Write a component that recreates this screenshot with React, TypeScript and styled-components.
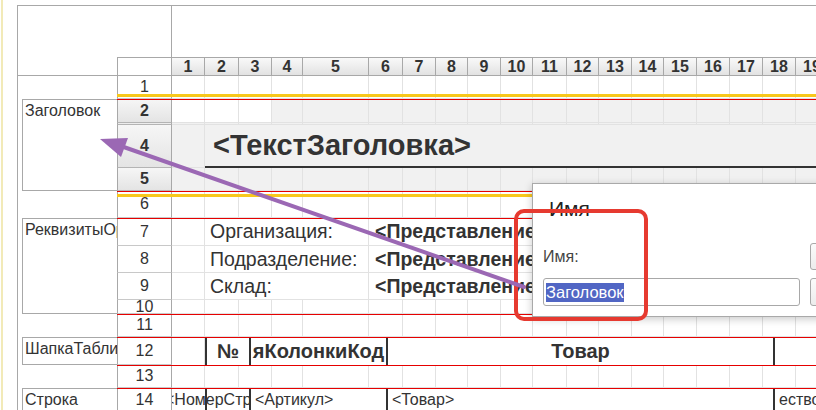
import React from "react";
import styled, { createGlobalStyle } from "styled-components";

const GlobalStyle = createGlobalStyle`
  * { box-sizing: border-box; }
  html, body {
    margin: 0;
    padding: 0;
    background: #fff;
  }
  body {
    font-family: "Liberation Sans", Arial, sans-serif;
    color: #333;
    overflow: hidden;
  }
`;

// widths of the sheet columns 1..19
const COLS = [33, 34, 33, 31, 66, 34, 33, 32, 33, 32, 34, 32, 33, 32, 33, 33, 33, 33, 33];
// heights of the sheet rows 1..14
const ROWS = [23, 24, 2, 43, 23, 27, 28, 27, 27, 14, 23, 28, 23, 24];

const gr = (n: number) => n + 2; // sheet row -> grid row
const gc = (c: number) => c + 2; // sheet column -> grid column

const Page = styled.div`
  position: relative;
  width: 816px;
  height: 410px;
  overflow: hidden;
  display: flex;
  align-items: flex-start;
`;

const Margin = styled.div`
  flex: none;
  width: 17px;
  align-self: stretch;
  background: linear-gradient(
    to right,
    #fff 0,
    #fff 1px,
    #f2eab8 1px,
    #f2eab8 3px,
    #fff 3px
  );
`;

const Sheet = styled.div`
  flex: none;
  margin-top: 5px;
  display: grid;
  grid-template-columns: 99px 55px ${COLS.map((w) => `${w}px`).join(" ")};
  grid-template-rows: 51px 19px ${ROWS.map((h) => `${h}px`).join(" ")};
  border-top: 1px solid #a8a8a8;
  border-left: 1px solid #a8a8a8;
`;

const TopLeft = styled.div`
  grid-row: 1;
  grid-column: 1 / span 2;
  border-right: 1px solid #a8a8a8;
`;

const LabelHead = styled.div`
  grid-row: 2;
  grid-column: 1;
  border-bottom: 1px solid #a8a8a8;
`;

const Corner = styled.div`
  grid-row: 2;
  grid-column: 2;
  border: 1px solid #a8a8a8;
  background: #fff;
`;

const ColHead = styled.div<{ $c: number }>`
  grid-row: 2;
  grid-column: ${(p) => p.$c};
  display: flex;
  align-items: center;
  justify-content: center;
  border-top: 1px solid #a8a8a8;
  border-bottom: 1px solid #a8a8a8;
  border-right: 1px solid #a8a8a8;
  background: linear-gradient(#f9f9f9, #e2e2e2);
  font-size: 16px;
  font-weight: bold;
  color: #333;
  white-space: nowrap;
`;

const RowNum = styled.div<{ $r: number; $active?: boolean }>`
  grid-row: ${(p) => p.$r};
  grid-column: 2;
  display: flex;
  align-items: center;
  justify-content: center;
  overflow: hidden;
  border-left: 1px solid #a8a8a8;
  border-right: 1px solid #a8a8a8;
  border-bottom: 1px solid ${(p) => (p.$active ? "#b4b4b4" : "#c8c8c8")};
  background: ${(p) => (p.$active ? "linear-gradient(#f6f6f6, #e4e4e4)" : "#fff")};
  font-size: 16px;
  font-weight: ${(p) => (p.$active ? "bold" : "normal")};
  line-height: 14px;
  color: #333;
`;

const Cell = styled.div<{ $r: number; $c: number; $fill?: boolean }>`
  grid-row: ${(p) => p.$r};
  grid-column: ${(p) => p.$c};
  background: ${(p) => (p.$fill ? "#f1f1f1" : "#fff")};
  border-right: 1px solid #e2e2e2;
  border-bottom: 1px solid #e2e2e2;
`;

const GroupBox = styled.div<{ $r: number; $span: number }>`
  grid-row: ${(p) => p.$r} / span ${(p) => p.$span};
  grid-column: 1;
  margin-left: 4px;
  padding: 2px 2px;
  border: 1px solid #a8a8a8;
  border-right: none;
  font-size: 16px;
  line-height: 18px;
  white-space: nowrap;
  overflow: hidden;
  color: #333;
`;

const Rule = styled.div<{ $r: number; $end?: boolean; $gold?: boolean; $offset?: number }>`
  grid-row: ${(p) => p.$r};
  grid-column: 2 / -1;
  align-self: ${(p) => (p.$end ? "end" : "start")};
  height: ${(p) => (p.$gold ? 3 : 1)}px;
  margin: ${(p) => (p.$end ? `0 0 ${p.$offset ?? 0}px` : `${p.$offset ?? 0}px 0 0`)};
  background: ${(p) => (p.$gold ? "#f8c81c" : "#e60000")};
  z-index: 2;
`;

const TitleCell = styled.div`
  grid-row: ${gr(4)};
  grid-column: ${gc(2)} / -1;
  display: flex;
  align-items: center;
  padding-left: 8px;
  background: #f1f1f1;
  border-bottom: 2px solid #333;
  font-size: 29px;
  font-weight: bold;
  color: #333;
  white-space: nowrap;
`;

const FieldLabel = styled.div<{ $r: number }>`
  grid-row: ${(p) => p.$r};
  grid-column: ${gc(2)} / span 4;
  display: flex;
  align-items: center;
  padding-left: 5px;
  border-right: 1px solid #e2e2e2;
  border-bottom: 1px solid #e2e2e2;
  font-size: 19.5px;
  white-space: nowrap;
`;

const FieldValue = styled.div<{ $r: number }>`
  grid-row: ${(p) => p.$r};
  grid-column: ${gc(6)} / -1;
  display: flex;
  align-items: center;
  padding-left: 6px;
  border-bottom: 1px solid #e2e2e2;
  font-size: 19.5px;
  font-weight: bold;
  white-space: nowrap;
  overflow: hidden;
`;

const TableRow = styled.div<{ $r: number }>`
  grid-row: ${(p) => p.$r};
  grid-column: ${gc(1)} / -1;
  display: flex;
  overflow: hidden;
  background: #fff;
`;

const TCell = styled.div<{ $w: number; $dark?: boolean; $bold?: boolean; $center?: boolean }>`
  flex: none;
  width: ${(p) => p.$w}px;
  display: flex;
  align-items: center;
  justify-content: ${(p) => (p.$center ? "center" : "flex-start")};
  padding-left: ${(p) => (p.$center ? 0 : 4)}px;
  border-left: ${(p) => (p.$dark ? "2px solid #333" : "none")};
  border-right: ${(p) => (p.$dark ? "none" : "1px solid #e2e2e2")};
  font-size: ${(p) => (p.$bold ? 20 : 16)}px;
  font-weight: ${(p) => (p.$bold ? "bold" : "normal")};
  white-space: nowrap;
  overflow: hidden;
`;

const NumCell = styled.div`
  flex: none;
  position: relative;
  width: 77px;
  display: flex;
  align-items: center;
  font-size: 16px;
  white-space: nowrap;
  overflow: hidden;
  text-indent: -7px;

  &::after {
    content: "";
    position: absolute;
    left: 33px;
    top: 0;
    bottom: 0;
    width: 2px;
    background: #333;
  }
`;

const Dialog = styled.div`
  position: absolute;
  left: 532px;
  top: 183px;
  width: 300px;
  height: 134px;
  background: #fff;
  border: 1px solid #a9a9a9;
  box-shadow: 0 2px 8px rgba(0, 0, 0, 0.22);
  padding: 0 0 0 10px;
  z-index: 5;
`;

const DialogTitle = styled.div`
  margin: 13px 0 0 6px;
  height: 24px;
  font-size: 21px;
  line-height: 24px;
  color: #222;
`;

const DialogBody = styled.div`
  margin-top: 22px;
  display: grid;
  grid-template-columns: 257px 60px;
  grid-template-rows: 27px 28px;
  column-gap: 10px;
  row-gap: 8px;
`;

const FormLabel = styled.div`
  align-self: center;
  font-size: 16px;
  color: #444;
`;

const TextInput = styled.div`
  display: flex;
  align-items: center;
  padding-left: 2px;
  border: 1px solid #a8a8a8;
  border-radius: 3px;
  font-size: 16.5px;
`;

const Selected = styled.span`
  background: #5166c4;
  color: #fff;
  line-height: 19px;
`;

const SideButton = styled.div`
  border: 1px solid #a8a8a8;
  border-radius: 3px;
  background: linear-gradient(#fbfbfb, #ececec);
`;

const Overlay = styled.svg`
  position: absolute;
  left: 0;
  top: 0;
  z-index: 10;
  pointer-events: none;
`;

const Annotations = () => (
  <Overlay width={816} height={410} viewBox="0 0 816 410">
    <rect x={516} y={211} width={130} height={108} rx={8} fill="none" stroke="#e63a30" strokeWidth={4} />
    <line x1={118} y1={145} x2={524} y2={287} stroke="#9b68b4" strokeWidth={4} strokeLinecap="round" />
    <polygon points="100,139 128,138 121,157" fill="#9b68b4" />
  </Overlay>
);

const plainRows = [1, 2, 3, 5, 6, 10, 11, 13];
const fields = [
  { n: 7, label: "Организация:", value: "<ПредставлениеОрганизации>" },
  { n: 8, label: "Подразделение:", value: "<ПредставлениеПодразделения>" },
  { n: 9, label: "Склад:", value: "<ПредставлениеСклада>" },
];

export default function App() {
  return (
    <>
      <GlobalStyle />
      <Page>
        <Margin />
        <Sheet>
          <TopLeft />
          <LabelHead />
          <Corner />
          {COLS.map((_, i) => (
            <ColHead key={i} $c={gc(i + 1)}>
              {i + 1}
            </ColHead>
          ))}

          {ROWS.map((_, i) => {
            const n = i + 1;
            return (
              <RowNum key={n} $r={gr(n)} $active={n >= 2 && n <= 5}>
                {n === 3 ? "" : n}
              </RowNum>
            );
          })}

          {plainRows.map((n) =>
            COLS.map((_, i) => (
              <Cell
                key={`${n}-${i}`}
                $r={gr(n)}
                $c={gc(i + 1)}
                $fill={n === 3 || n === 5 || (n === 2 && i >= 3)}
              />
            ))
          )}

          <Cell $r={gr(4)} $c={gc(1)} $fill />
          <TitleCell>&lt;ТекстЗаголовка&gt;</TitleCell>

          {fields.map((f) => (
            <React.Fragment key={f.n}>
              <Cell $r={gr(f.n)} $c={gc(1)} />
              <FieldLabel $r={gr(f.n)}>{f.label}</FieldLabel>
              <FieldValue $r={gr(f.n)}>{f.value}</FieldValue>
            </React.Fragment>
          ))}

          <TableRow $r={gr(12)}>
            <TCell $w={33} />
            <TCell $w={44} $dark $bold $center>
              №
            </TCell>
            <TCell $w={137} $dark $bold $center>
              яКолонкиКод
            </TCell>
            <TCell $w={387} $dark $bold $center>
              Товар
            </TCell>
            <TCell $w={200} $dark />
          </TableRow>

          <TableRow $r={gr(14)}>
            <NumCell>&lt;НомерСтроки&gt;</NumCell>
            <TCell $w={137} $dark>
              &lt;Артикул&gt;
            </TCell>
            <TCell $w={387} $dark>
              &lt;Товар&gt;
            </TCell>
            <TCell $w={200} $dark>
              ество
            </TCell>
          </TableRow>

          <GroupBox $r={gr(2)} $span={4}>
            Заголовок
          </GroupBox>
          <GroupBox $r={gr(7)} $span={4}>
            РеквизитыОрганизации
          </GroupBox>
          <GroupBox $r={gr(12)} $span={1}>
            ШапкаТаблицы
          </GroupBox>
          <GroupBox $r={gr(14)} $span={1}>
            Строка
          </GroupBox>

          <Rule $r={gr(1)} $end $gold $offset={2} />
          <Rule $r={gr(2)} />
          <Rule $r={gr(6)} />
          <Rule $r={gr(6)} $gold $offset={3} />
          <Rule $r={gr(7)} />
          <Rule $r={gr(11)} />
          <Rule $r={gr(12)} />
          <Rule $r={gr(13)} />
          <Rule $r={gr(14)} />
        </Sheet>

        <Dialog>
          <DialogTitle>Имя</DialogTitle>
          <DialogBody>
            <FormLabel>Имя:</FormLabel>
            <SideButton />
            <TextInput>
              <Selected>Заголовок</Selected>
            </TextInput>
            <SideButton />
          </DialogBody>
        </Dialog>

        <Annotations />
      </Page>
    </>
  );
}
